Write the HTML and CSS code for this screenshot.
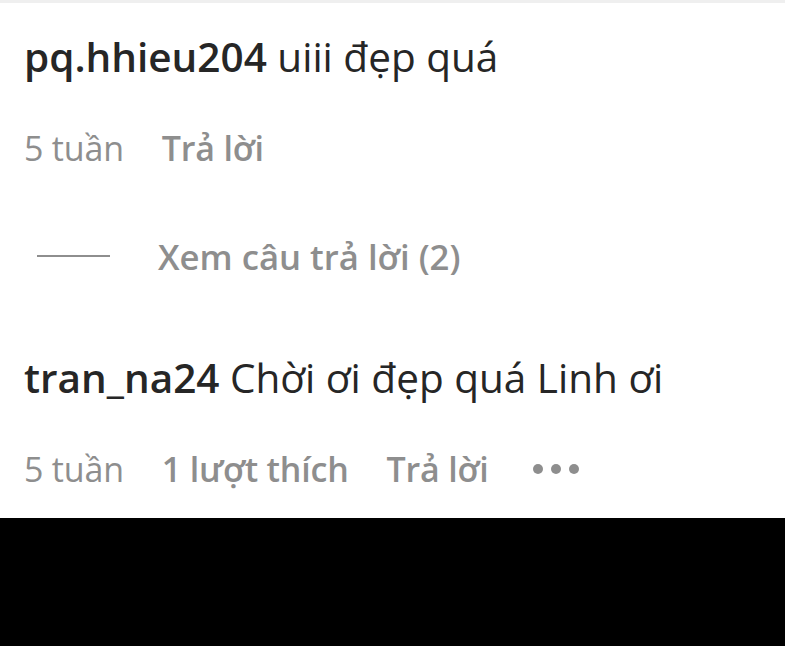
FILE: index.html
```html
<!DOCTYPE html>
<html lang="vi">
<head>
<meta charset="utf-8">
<link rel="stylesheet" href="styles.css">
</head>
<body>
<div class="page">
  <div class="panel">
    <div class="comment first">
      <p class="text"><span class="user">pq.hhieu204</span> uiii đẹp quá</p>
      <div class="meta"><span class="time">5 tuần</span><span class="action">Trả lời</span></div>
    </div>
    <div class="replies"><span class="rule"></span><span class="action">Xem câu trả lời (2)</span></div>
    <div class="comment">
      <p class="text"><span class="user">tran_na24</span> Chời ơi đẹp quá Linh ơi</p>
      <div class="meta"><span class="time">5 tuần</span><span class="action">1 lượt thích</span><span class="action">Trả lời</span><span class="dots"><i></i><i></i><i></i></span></div>
    </div>
  </div>
  <div class="footer"></div>
</div>
</body>
</html>
```

FILE: styles.css
```css
html, body { margin: 0; padding: 0; }
body { font-family: "Open Sans", "Noto Sans", sans-serif; background: #fff; width: 785px; height: 646px; overflow: hidden; }
.page { display: flex; flex-direction: column; height: 646px; }
.panel { flex: 0 0 518px; border-top: 3px solid #efefef; box-sizing: border-box; padding-left: 24px; }
.footer { flex: 1; background: #000; }
.comment { display: flex; flex-direction: column; }
.text { margin: 0; font-size: 40.5px; line-height: 44px; color: #262626; }
.user { font-weight: 600; }
.first .text { margin-top: 32px; }
.meta { display: flex; align-items: center; gap: 38px; margin-top: 49px; font-size: 34px; line-height: 40px; color: #8e8e8e; letter-spacing: -0.2px; }
.action { font-weight: 600; }
.replies { display: flex; align-items: center; margin-top: 68px; height: 40px; font-size: 34.7px; color: #8e8e8e; }
.rule { width: 73px; height: 2px; background: #8e8e8e; margin-left: 13px; margin-right: 48px; }
.comment + .comment, .replies + .comment { margin-top: 80px; }
.dots { display: flex; gap: 8px; margin-left: 6px; }
.dots i { width: 10px; height: 10px; border-radius: 50%; background: #8e8e8e; display: block; }
```
